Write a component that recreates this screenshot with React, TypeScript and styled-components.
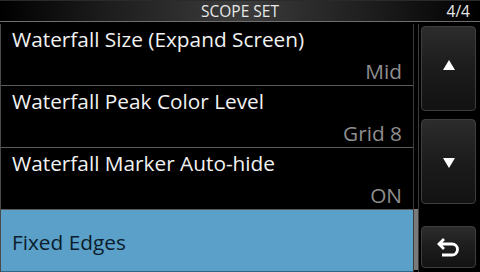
import React from "react";
import styled, { createGlobalStyle } from "styled-components";

const Global = createGlobalStyle`
  html, body { margin: 0; padding: 0; background: #000; }
  body { font-family: "Open Sans", "Noto Sans", sans-serif; }
`;

const Screen = styled.div`
  width: 480px;
  height: 272px;
  background: #000;
  display: flex;
  flex-direction: column;
  overflow: hidden;
`;

const TitleBar = styled.div`
  height: 22px;
  box-sizing: border-box;
  border-top: 1px solid #2a2a2a;
  border-bottom: 1px solid #6e6e6e;
  background: linear-gradient(to right, #000 0%, #1a1a1a 20%, #3c3c3c 50%, #1a1a1a 80%, #000 100%);
  display: grid;
  grid-template-columns: 1fr auto 1fr;
  align-items: center;
  color: #e8e8e8;
  font-size: 15.5px;
  line-height: 20px;
`;

const Title = styled.div`
  grid-column: 2;
`;

const PageNo = styled.div`
  grid-column: 3;
  justify-self: end;
  padding-right: 10px;
`;

const Body = styled.div`
  flex: 1;
  display: flex;
  margin-top: 2px;
`;

const List = styled.div`
  width: 413px;
  box-sizing: border-box;
  border-left: 1px solid #4a4a4a;
  display: flex;
  flex-direction: column;
`;

const Row = styled.div<{ $selected?: boolean }>`
  height: 62px;
  box-sizing: border-box;
  border-bottom: 1px solid ${(p) => (p.$selected ? "#2f6585" : "#5a5a5a")};
  background: ${(p) => (p.$selected ? "#5aa0c8" : "#000")};
  display: flex;
  flex-direction: column;
  justify-content: ${(p) => (p.$selected ? "center" : "space-between")};
  padding: ${(p) => (p.$selected ? "3px 11px 0 11px" : "2px 11px 1px 11px")};
`;

const Label = styled.div<{ $selected?: boolean }>`
  color: ${(p) => (p.$selected ? "#0c1c2c" : "#f2f2f2")};
  font-size: 20.8px;
  line-height: 26px;
  white-space: nowrap;
`;

const Value = styled.div`
  align-self: flex-end;
  color: #8e8e8e;
  font-size: 20.8px;
  line-height: 26px;
`;

const ScrollTrack = styled.div`
  width: 6px;
  box-sizing: border-box;
  border-left: 1px solid #3c3c3c;
  border-right: 1px solid #3c3c3c;
  display: flex;
  flex-direction: column;
  justify-content: flex-end;
  padding-bottom: 2px;
`;

const ScrollThumb = styled.div`
  background: #7a7a7a;
`;

const Side = styled.div`
  flex: 1;
  display: flex;
  flex-direction: column;
  padding: 2px 4px 4px 2px;
  gap: 8px;
`;

const Button = styled.div<{ $h: number; $gapTop?: number }>`
  height: ${(p) => p.$h}px;
  margin-top: ${(p) => p.$gapTop ?? 0}px;
  box-sizing: border-box;
  border: 1px solid #3e3e3e;
  border-radius: 4px;
  background: linear-gradient(to bottom, #2c2c2c 0%, #1c1c1c 50%, #121212 100%);
  display: flex;
  align-items: center;
  justify-content: center;
`;

const Triangle = ({ down }: { down?: boolean }) => (
  <svg width="14" height="12" viewBox="0 0 14 12" style={{ marginTop: down ? 2 : -8 }}>
    {down ? <polygon points="1,1 13,1 7,11" fill="#fff" /> : <polygon points="7,1 13,11 1,11" fill="#fff" />}
  </svg>
);

const BackIcon = () => (
  <svg width="24" height="22" viewBox="0 0 24 22" style={{ marginTop: 2 }}>
    <path
      d="M7 2 L2 7 L7 12 M2 7 H15 A5.5 5.5 0 0 1 15 18 H5"
      fill="none"
      stroke="#fff"
      strokeWidth="2.8"
      strokeLinejoin="miter"
    />
  </svg>
);

const items = [
  { label: "Waterfall Size (Expand Screen)", value: "Mid" },
  { label: "Waterfall Peak Color Level", value: "Grid 8" },
  { label: "Waterfall Marker Auto-hide", value: "ON" },
  { label: "Fixed Edges", value: "", selected: true },
];

export default function App() {
  return (
    <Screen>
      <Global />
      <TitleBar>
        <Title>SCOPE SET</Title>
        <PageNo>4/4</PageNo>
      </TitleBar>
      <Body>
        <List>
          {items.map((it) => (
            <Row key={it.label} $selected={it.selected}>
              <Label $selected={it.selected}>{it.label}</Label>
              {it.value && <Value>{it.value}</Value>}
            </Row>
          ))}
        </List>
        <ScrollTrack>
          <ScrollThumb style={{ height: `${(1 / 4) * 100}%` }} />
        </ScrollTrack>
        <Side>
          <Button $h={85}>
            <Triangle />
          </Button>
          <Button $h={85}>
            <Triangle down />
          </Button>
          <Button $h={42} $gapTop={14}>
            <BackIcon />
          </Button>
        </Side>
      </Body>
    </Screen>
  );
}
